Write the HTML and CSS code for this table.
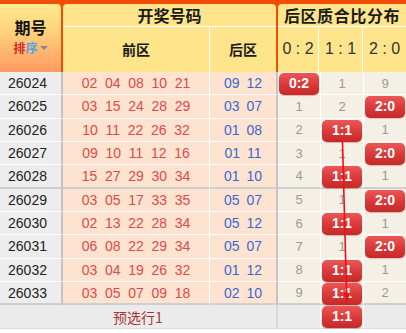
FILE: index.html
```html
<!DOCTYPE html>
<html lang="zh">
<head>
<meta charset="utf-8">
<link rel="stylesheet" href="styles.css">
</head>
<body>
<div class="board">
  <div class="head">
    <div class="h-id">
      <div class="h-id-title">期号</div>
      <div class="sort"><span class="s-red">排</span><span class="s-blue">序</span><span class="tri"></span></div>
    </div>
    <div class="h-prize">
      <div class="h-title">开奖号码</div>
      <div class="h-sub"><div class="h-front">前区</div><div class="h-back">后区</div></div>
    </div>
    <div class="h-dist">
      <div class="h-title">后区质合比分布</div>
      <div class="h-ratios"><div class="r1">0 : 2</div><div class="r2">1 : 1</div><div class="r3">2 : 0</div></div>
    </div>
  </div>

  <div class="rows">
    <div class="row">
      <div class="c-id">26024</div>
      <div class="c-front"><span>02</span><span>04</span><span>08</span><span>10</span><span>21</span></div>
      <div class="c-back"><span>09</span><span>12</span></div>
      <div class="c-d"><span class="badge">0:2</span></div><div class="c-d">1</div><div class="c-d last">9</div>
    </div>
    <div class="row">
      <div class="c-id">26025</div>
      <div class="c-front"><span>03</span><span>15</span><span>24</span><span>28</span><span>29</span></div>
      <div class="c-back"><span>03</span><span>07</span></div>
      <div class="c-d">1</div><div class="c-d">2</div><div class="c-d last"><span class="badge">2:0</span></div>
    </div>
    <div class="row">
      <div class="c-id">26026</div>
      <div class="c-front"><span>10</span><span>11</span><span>22</span><span>26</span><span>32</span></div>
      <div class="c-back"><span>01</span><span>08</span></div>
      <div class="c-d">2</div><div class="c-d"><span class="badge">1:1</span></div><div class="c-d last">1</div>
    </div>
    <div class="row">
      <div class="c-id">26027</div>
      <div class="c-front"><span>09</span><span>10</span><span>11</span><span>12</span><span>16</span></div>
      <div class="c-back"><span>01</span><span>11</span></div>
      <div class="c-d">3</div><div class="c-d">1</div><div class="c-d last"><span class="badge">2:0</span></div>
    </div>
    <div class="row grp">
      <div class="c-id">26028</div>
      <div class="c-front"><span>15</span><span>27</span><span>29</span><span>30</span><span>34</span></div>
      <div class="c-back"><span>01</span><span>10</span></div>
      <div class="c-d">4</div><div class="c-d"><span class="badge">1:1</span></div><div class="c-d last">1</div>
    </div>
    <div class="row">
      <div class="c-id">26029</div>
      <div class="c-front"><span>03</span><span>05</span><span>17</span><span>33</span><span>35</span></div>
      <div class="c-back"><span>05</span><span>07</span></div>
      <div class="c-d">5</div><div class="c-d">1</div><div class="c-d last"><span class="badge">2:0</span></div>
    </div>
    <div class="row">
      <div class="c-id">26030</div>
      <div class="c-front"><span>02</span><span>13</span><span>22</span><span>28</span><span>34</span></div>
      <div class="c-back"><span>05</span><span>12</span></div>
      <div class="c-d">6</div><div class="c-d"><span class="badge">1:1</span></div><div class="c-d last">1</div>
    </div>
    <div class="row">
      <div class="c-id">26031</div>
      <div class="c-front"><span>06</span><span>08</span><span>22</span><span>29</span><span>34</span></div>
      <div class="c-back"><span>05</span><span>07</span></div>
      <div class="c-d">7</div><div class="c-d">1</div><div class="c-d last"><span class="badge">2:0</span></div>
    </div>
    <div class="row">
      <div class="c-id">26032</div>
      <div class="c-front"><span>03</span><span>04</span><span>19</span><span>26</span><span>32</span></div>
      <div class="c-back"><span>01</span><span>12</span></div>
      <div class="c-d">8</div><div class="c-d"><span class="badge">1:1</span></div><div class="c-d last">1</div>
    </div>
    <div class="row grp">
      <div class="c-id">26033</div>
      <div class="c-front"><span>03</span><span>05</span><span>07</span><span>09</span><span>18</span></div>
      <div class="c-back"><span>02</span><span>10</span></div>
      <div class="c-d">9</div><div class="c-d"><span class="badge">1:1</span></div><div class="c-d last">2</div>
    </div>
    <svg class="arrow" width="406" height="240" viewBox="0 0 406 240">
      <line x1="342.5" y1="70" x2="346.6" y2="223" stroke="#f21010" stroke-width="1.6"/>
      <polygon points="343.6,221 350,221 347,230.5" fill="#f21010"/>
    </svg>
  </div>

  <div class="foot">
    <div class="f-label">预选行1</div>
    <div class="f-d"></div><div class="f-d"><span class="badge">1:1</span></div><div class="f-d last"></div>
  </div>
</div>
</body>
</html>
```

FILE: styles.css
```css
* { box-sizing: border-box; }
body {
  margin: 0;
  background: #fff;
  font-family: "Liberation Sans", "Noto Sans CJK SC", sans-serif;
}
.board { width: 406px; }

/* header */
.head {
  display: flex;
  gap: 2px;
  height: 72px;
  padding-top: 4px;
  background: #f24c05;
}
.h-id {
  width: 61px;
  border-top-right-radius: 4px;
  background: linear-gradient(#ffe98e, #ffd27c 40%, #ff9a62);
  display: flex;
  flex-direction: column;
  align-items: center;
  padding-top: 14px;
  font-family: "Noto Sans CJK SC", sans-serif;
}
.h-id-title {
  height: 19px;
  font-size: 16px;
  font-weight: bold;
  color: #111;
  line-height: 19px;
}
.sort {
  display: flex;
  align-items: center;
  height: 16px;
  margin-top: 3px;
  font-size: 12px;
  font-weight: bold;
  line-height: 16px;
}
.s-red { color: #d42a2a; }
.s-blue { color: #46a6f2; }
.tri {
  width: 0;
  height: 0;
  margin-left: 2px;
  border-left: 4px solid transparent;
  border-right: 4px solid transparent;
  border-top: 4px solid #8a8a8a;
}
.h-prize, .h-dist {
  display: flex;
  flex-direction: column;
  background: #fee48b;
  font-family: "Noto Sans CJK SC", sans-serif;
  color: #1a1a1a;
}
.h-prize {
  width: 213px;
  border-radius: 4px 4px 0 0;
}
.h-dist {
  flex: 1;
  border-top-left-radius: 4px;
}
.h-title {
  height: 23px;
  line-height: 22px;
  border-bottom: 1px solid #fff;
  font-size: 16px;
  font-weight: bold;
  text-align: center;
}
.h-dist .h-title { letter-spacing: 0.6px; }
.h-sub {
  flex: 1;
  display: flex;
}
.h-front, .h-back {
  display: flex;
  align-items: center;
  justify-content: center;
  font-size: 14px;
  font-weight: bold;
  padding-bottom: 2px;
}
.h-front {
  width: 147px;
  border-right: 1px solid #fff;
}
.h-back { flex: 1; }
.h-ratios {
  flex: 1;
  display: flex;
}
.h-ratios div {
  display: flex;
  align-items: center;
  justify-content: center;
  font-family: "Liberation Sans", sans-serif;
  font-size: 16px;
  color: #333;
  padding-bottom: 2px;
}
.h-ratios .r1 { width: 41px; border-right: 1px solid #fff; }
.h-ratios .r2 { width: 44px; border-right: 1px solid #fff; }
.h-ratios .r3 { flex: 1; }

/* body rows */
.rows { position: relative; }
.row {
  display: flex;
  height: 23.333px;
}
.row > div {
  height: 100%;
  border-bottom: 1px solid #fff;
  display: flex;
  align-items: center;
  justify-content: center;
}
.row.grp > div { border-bottom: 2px solid #cfcfcf; }
.c-id {
  width: 63px;
  padding-right: 6px;
  background: #ededed;
  border-right: 2px solid #c4c4c4;
  font-size: 14px;
  color: #222;
}
.c-front, .c-back {
  background: #fee4d0;
  gap: 7.7px;
  font-size: 14px;
}
.c-front {
  width: 147px;
  border-right: 1px solid #fff;
  color: #e24848;
}
.c-back {
  width: 68px;
  border-right: 2px solid #c4c4c4;
  color: #3a68d2;
  gap: 7px;
}
.c-d, .f-d {
  width: 43px;
  border-right: 1px solid #fff;
  background: #f5f0e6;
  font-size: 13px;
  color: #999;
  position: relative;
}
.c-d.last, .f-d.last {
  width: 42px;
  border-right: 0;
}
.badge {
  display: block;
  width: calc(100% - 2px);
  height: 22px;
  align-self: flex-start;
  margin-top: 1px;
  border-radius: 5px;
  background: linear-gradient(#ec5757, #d83838 55%, #c62828);
  box-shadow: 0 1px 1px rgba(120, 0, 0, 0.25);
  color: #fff;
  font-size: 14px;
  font-weight: bold;
  line-height: 20px;
  text-align: center;
  position: relative;
  z-index: 1;
}
.arrow {
  position: absolute;
  left: 0;
  top: 0;
  z-index: 2;
  overflow: visible;
}

/* footer */
.foot {
  display: flex;
  height: 24px;
  background: #ebebeb;
  border-bottom: 1px solid #dcdcdc;
}
.foot > div {
  display: flex;
  align-items: center;
  justify-content: center;
}
.f-label {
  width: 278px;
  border-right: 2px solid #d8d8d8;
  font-family: "Noto Sans CJK SC", sans-serif;
  font-size: 14px;
  color: #a83434;
}
.f-d { background: #ebebeb; }
.f-d .badge { margin-top: 1px; }
```
